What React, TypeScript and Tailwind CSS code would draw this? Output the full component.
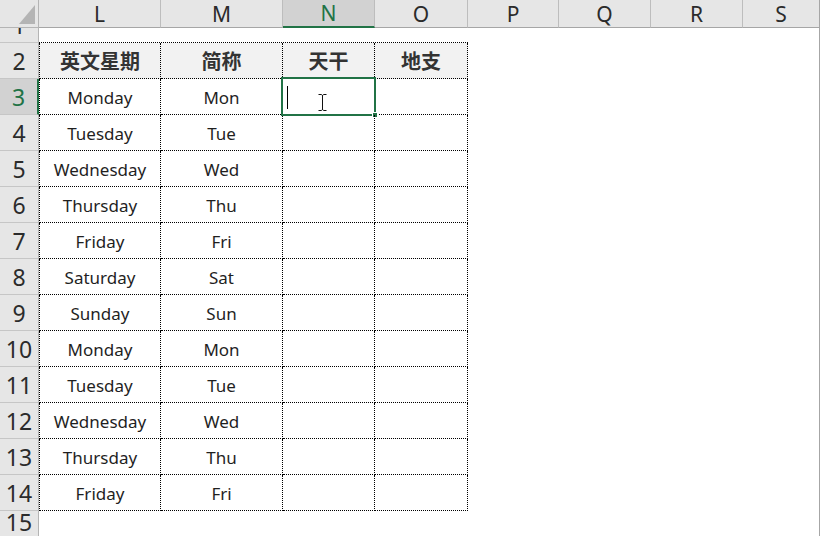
import React from "react";

const GREEN = "#217346";

const data: [string, string][] = [
  ["Monday", "Mon"],
  ["Tuesday", "Tue"],
  ["Wednesday", "Wed"],
  ["Thursday", "Thu"],
  ["Friday", "Fri"],
  ["Saturday", "Sat"],
  ["Sunday", "Sun"],
  ["Monday", "Mon"],
  ["Tuesday", "Tue"],
  ["Wednesday", "Wed"],
  ["Thursday", "Thu"],
  ["Friday", "Fri"],
];

const numFont = { fontFamily: '"Liberation Sans Narrow", "Noto Sans", sans-serif' };
const cellFont = { fontFamily: '"Noto Sans", "Noto Sans CJK SC", sans-serif' };
const cjkFont = { fontFamily: '"Noto Sans CJK SC", "Noto Sans", sans-serif' };

function RowHeader({ n, selected, h, last }: { n: number; selected?: boolean; h: string; last?: boolean }) {
  return (
    <div
      className={`${h} w-[39px] shrink-0 overflow-hidden flex items-end justify-center border-b border-b-[#c6c6c6] ${
        selected
          ? "bg-[#d2d2d2] text-[#217346] border-r-2 border-r-[#217346]"
          : "bg-[#e6e6e6] text-[#2b2b2b] border-r border-r-[#b4b4b4]"
      }`}
      style={numFont}
    >
      <span className={`text-[23px] leading-[23px] ${last ? "pb-[2px]" : "pb-[5px]"}`}>{n}</span>
    </div>
  );
}

function IBeam() {
  return (
    <svg width="9" height="17" viewBox="0 0 9 17" className="absolute left-[35px] top-[15px]">
      <path d="M0.5 0.5 H3.5 M5.5 0.5 H8.5 M3.5 0.5 Q4.5 1 4.5 2 V15 Q4.5 16 3.5 16.5 M5.5 0.5 Q4.5 1 4.5 2 M4.5 15 Q4.5 16 5.5 16.5 M0.5 16.5 H3.5 M5.5 16.5 H8.5" stroke="#111" strokeWidth="1" fill="none" />
    </svg>
  );
}

export default function App() {
  const colHeaders = [
    { l: "L", w: "w-[122px]" },
    { l: "M", w: "w-[122px]" },
    { l: "N", w: "w-[92px]", sel: true },
    { l: "O", w: "w-[93px]" },
    { l: "P", w: "w-[91px]" },
    { l: "Q", w: "w-[92px]" },
    { l: "R", w: "w-[92px]" },
    { l: "S", w: "w-[77px]" },
  ];

  return (
    <div className="w-[821px] h-[536px] bg-white overflow-hidden">
      <div className="w-[820px] h-[536px] border-r border-r-[#a6a6a6] overflow-hidden">
        {/* column header row */}
        <div className="flex h-[28px]">
          <div className="relative w-[39px] shrink-0 bg-[#e6e6e6] border-r border-b border-[#b4b4b4]">
            <svg width="16" height="19" viewBox="0 0 16 19" className="absolute left-[19px] top-[5px]">
              <polygon points="16,0 16,19 0,19" fill="#b4b4b4" />
            </svg>
          </div>
          {colHeaders.map((c) => (
            <div
              key={c.l}
              className={`${c.w} shrink-0 flex items-center justify-center border-r border-r-[#bdbdbd] text-[21px] ${
                c.sel
                  ? "bg-[#d2d2d2] text-[#217346] border-b-2 border-b-[#217346]"
                  : "bg-[#e6e6e6] text-[#2b2b2b] border-b border-b-[#a6a6a6]"
              }`}
              style={numFont}
            >
              <span className="pt-[2px]">{c.l}</span>
            </div>
          ))}
          <div className="flex-1 bg-[#e6e6e6] border-b border-b-[#a6a6a6]" />
        </div>

        {/* row 1 */}
        <div className="flex h-[15px]">
          <RowHeader n={1} h="h-[15px]" />
          <div className="w-[429px] shrink-0 border-b border-dotted border-b-black" />
        </div>

        {/* row 2 */}
        <div className="flex h-[36px]" style={cjkFont}>
          <RowHeader n={2} h="h-[36px]" />
          <div className="w-[122px] shrink-0 bg-[#f2f2f2] border-l border-r border-b border-dotted border-black flex items-center justify-center text-[20px] font-bold text-[#333]">
            英文星期
          </div>
          <div className="w-[122px] shrink-0 bg-[#f2f2f2] border-r border-b border-dotted border-black flex items-center justify-center text-[20px] font-bold text-[#333]">
            简称
          </div>
          <div className="w-[92px] shrink-0 bg-[#f2f2f2] border-r border-b border-dotted border-black flex items-center justify-center text-[20px] font-bold text-[#333]">
            天干
          </div>
          <div className="w-[93px] shrink-0 bg-[#f2f2f2] border-r border-b border-dotted border-black flex items-center justify-center text-[20px] font-bold text-[#333]">
            地支
          </div>
        </div>

        {data.map(([a, b], i) => {
          const n = i + 3;
          const sel = n === 3;
          return (
            <div key={n} className="flex h-[36px]" style={cellFont}>
              <RowHeader n={n} h="h-[36px]" selected={sel} />
              <div className="w-[122px] shrink-0 border-l border-r border-b border-dotted border-black flex items-center justify-center text-[17px] text-[#1f1f1f]">
                <span className="pt-[3px]">{a}</span>
              </div>
              <div className="w-[122px] shrink-0 border-r border-b border-dotted border-black flex items-center justify-center text-[17px] text-[#1f1f1f]">
                <span className="pt-[3px]">{b}</span>
              </div>
              <div className="relative w-[92px] shrink-0 border-r border-b border-dotted border-black">
                {sel && (
                  <>
                    <div className="absolute left-[-2px] top-[-2px] right-[-2px] bottom-[-2px] border-2 border-[#217346]" style={{ borderColor: GREEN }} />
                    <div className="absolute right-[-4px] bottom-[-4px] w-[6px] h-[6px] bg-[#217346] border border-white" />
                    <div className="absolute left-[4px] top-[7px] w-[1px] h-[23px] bg-black" />
                    <IBeam />
                  </>
                )}
              </div>
              <div className="w-[93px] shrink-0 border-r border-b border-dotted border-black" />
            </div>
          );
        })}

        {/* row 15 */}
        <div className="flex h-[26px]">
          <RowHeader n={15} h="h-[26px]" last />
        </div>
      </div>
    </div>
  );
}
